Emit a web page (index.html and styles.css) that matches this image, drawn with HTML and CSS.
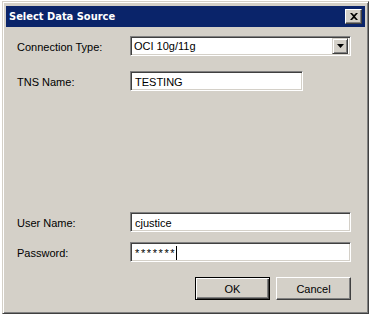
FILE: index.html
```html
<!DOCTYPE html>
<html lang="en">
<head>
    <meta charset="UTF-8">
    <title>Select Data Source</title>
    <link rel="stylesheet" href="styles.css">
</head>
<body>
    <div class="janela">
        <div class="titulo">
            <span class="titulo-texto">Select Data Source</span>
            <button class="fechar">
                <svg width="8" height="7" viewBox="0 0 8 7"><path d="M0 0h2l2 2 2-2h2L5 3.5 8 7H6L4 5 2 7H0l3-3.5z" fill="#000"/></svg>
            </button>
        </div>
        <div class="corpo">
            <div class="linha">
                <label class="rotulo">Connection Type:</label>
                <div class="campo combo">
                    <span class="valor">OCI 10g/11g</span>
                    <span class="seta">
                        <svg width="7" height="4" viewBox="0 0 7 4"><path d="M0 0h7L3.5 4z" fill="#000"/></svg>
                    </span>
                </div>
            </div>
            <div class="linha tns">
                <label class="rotulo">TNS Name:</label>
                <div class="campo curto"><span class="valor">TESTING</span></div>
            </div>
            <div class="espaco"></div>
            <div class="linha">
                <label class="rotulo">User Name:</label>
                <div class="campo"><span class="valor">cjustice</span></div>
            </div>
            <div class="linha senha">
                <label class="rotulo">Password:</label>
                <div class="campo"><span class="valor asteriscos">*******</span><span class="cursor"></span></div>
            </div>
            <div class="botoes">
                <button class="botao padrao">OK</button>
                <button class="botao">Cancel</button>
            </div>
        </div>
    </div>
</body>
</html>
```

FILE: styles.css
```css
*{
    margin: 0;
    padding: 0;
    box-sizing: border-box;
}
body{
    background-color: #ffffff;
    font-family: "Liberation Sans", Arial, sans-serif;
    font-size: 11px;
    color: #000;
}
.janela{
    width: 367px;
    height: 313px;
    margin: 1px 0 0 2px;
    background-color: #d4d0c8;
    border: 1px solid;
    border-color: #d4d0c8 #404040 #404040 #d4d0c8;
    box-shadow: inset 1px 1px #ffffff, inset -1px -1px #808080;
    padding: 3px;
    display: flex;
    flex-direction: column;
}
.titulo{
    height: 21px;
    background-color: #0a246a;
    display: flex;
    align-items: center;
    justify-content: space-between;
    padding: 0 3px 0 3px;
    margin-top: 1px;
}
.titulo-texto{
    color: #ffffff;
    font-family: "DejaVu Sans Condensed", "DejaVu Sans", sans-serif;
    font-stretch: condensed;
    font-weight: bold;
    font-size: 11px;
}
.fechar{
    width: 17px;
    height: 15px;
    background-color: #d4d0c8;
    border: 1px solid;
    border-color: #ffffff #404040 #404040 #ffffff;
    box-shadow: inset -1px -1px #808080;
    display: flex;
    align-items: center;
    justify-content: center;
}
.corpo{
    flex: 1;
    display: flex;
    flex-direction: column;
    padding: 9px 14px 0 11px;
}
.linha{
    display: flex;
    align-items: center;
    height: 20px;
}
.tns{
    margin-top: 15px;
}
.senha{
    margin-top: 10px;
}
.rotulo{
    width: 113px;
    padding-top: 2px;
}
.campo{
    flex: 1;
    height: 20px;
    background-color: #ffffff;
    border: 1px solid;
    border-color: #808080 #ffffff #ffffff #808080;
    box-shadow: inset 1px 1px #404040, inset -1px -1px #d4d0c8;
    display: flex;
    align-items: center;
    padding: 1px 2px 0 4px;
}
.curto{
    flex: none;
    width: 173px;
}
.combo{
    justify-content: space-between;
    padding: 2px 2px 2px 3px;
}
.seta{
    width: 16px;
    height: 16px;
    background-color: #d4d0c8;
    border: 1px solid;
    border-color: #d4d0c8 #404040 #404040 #d4d0c8;
    box-shadow: inset 1px 1px #ffffff, inset -1px -1px #808080;
    display: flex;
    align-items: center;
    justify-content: center;
}
.asteriscos{
    letter-spacing: 1.6px;
}
.cursor{
    display: inline-block;
    width: 1px;
    height: 14px;
    background-color: #000;
}
.espaco{
    height: 121px;
}
.botoes{
    display: flex;
    justify-content: flex-end;
    gap: 6px;
    margin-top: 15px;
}
.botao{
    width: 75px;
    height: 23px;
    background-color: #d4d0c8;
    font-family: "Liberation Sans", Arial, sans-serif;
    font-size: 11px;
    border: 1px solid;
    border-color: #ffffff #404040 #404040 #ffffff;
    box-shadow: inset -1px -1px #808080;
}
.padrao{
    border: 1px solid #000;
    box-shadow: inset 1px 1px #ffffff, inset -1px -1px #404040, inset -2px -2px #808080;
}
```
